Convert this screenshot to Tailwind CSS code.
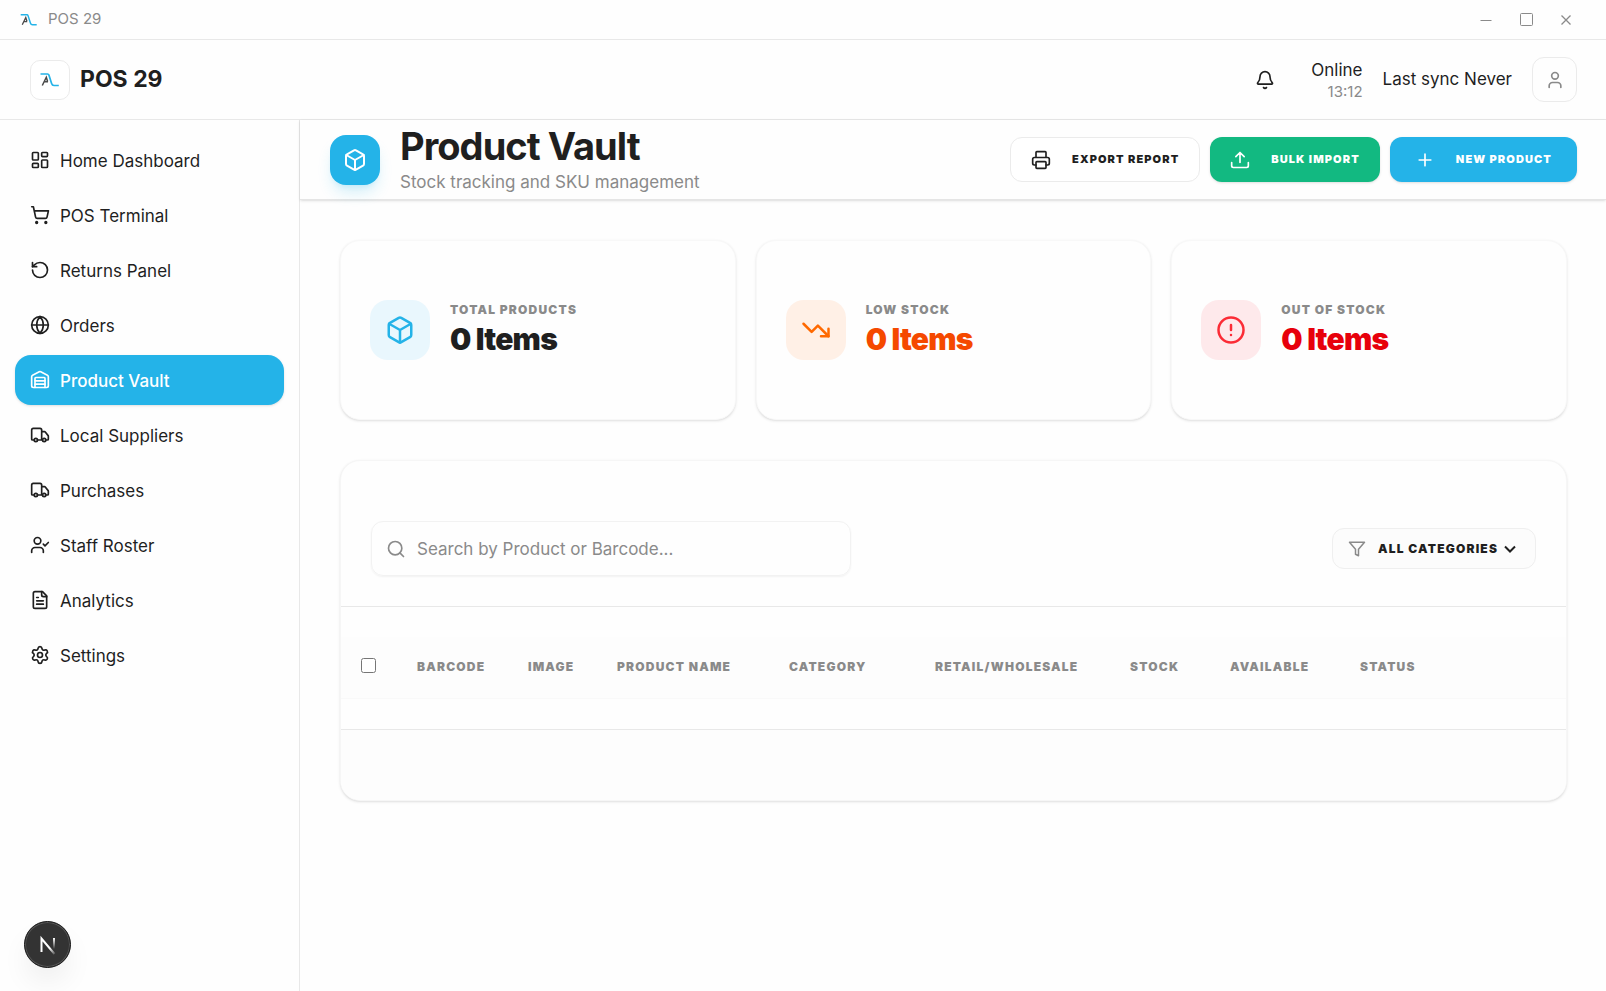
<!DOCTYPE html>
<html lang="en">
<head>
    <meta charset="UTF-8">
    <meta name="viewport" content="width=device-width, initial-scale=1.0">
    <title>POS 29</title>
    <script src="https://cdn.jsdelivr.net/npm/@tailwindcss/browser@4"></script>
</head>
<body class="flex min-h-screen flex-col bg-[#fefefe] font-['Inter','Liberation_Sans',sans-serif] text-[17px] text-[#1f1f1f]">
    <!-- Shared icon shapes -->
    <svg class="hidden">
        <symbol id="logo" viewBox="0 0 20 16">
            <path d="M0.500 2H7.600Q8.600 2 8.900 3L11.600 11.500Q12.200 13.500 14 13.500H18.800" fill="none" stroke="#24b3e8" stroke-width="1.7"/>
            <path d="M2.300 13.500L6.300 5.200L7.600 9.500M4.300 9.800H8" fill="none" stroke="#4a4a4a" stroke-width="1.500"/>
        </symbol>
        <symbol id="box" viewBox="0 0 24 24">
            <path d="M21 8a2 2 0 0 0-1-1.73l-7-4a2 2 0 0 0-2 0l-7 4A2 2 0 0 0 3 8v8a2 2 0 0 0 1 1.73l7 4a2 2 0 0 0 2 0l7-4A2 2 0 0 0 21 16Z"/>
            <path d="m3.3 7 8.7 5 8.7-5M12 22V12"/>
        </symbol>
        <symbol id="truck" viewBox="0 0 24 24">
            <path d="M14 18V6a2 2 0 0 0-2-2H4a2 2 0 0 0-2 2v11a1 1 0 0 0 1 1h2M15 18H9M19 18h2a1 1 0 0 0 1-1v-3.65a1 1 0 0 0-.22-.624l-3.48-4.35A1 1 0 0 0 17.52 8H14"/>
            <circle cx="17" cy="18" r="2"/><circle cx="7" cy="18" r="2"/>
        </symbol>
    </svg>

    <!-- Title bar -->
    <div class="flex h-10 items-center justify-between border-b border-[#e8e8e8] pr-[30px] pl-5">
        <div class="flex items-center gap-2.5 text-[15px] text-[#8a8a8a]">
            <svg class="h-3.5 w-[18px]"><use href="#logo"/></svg>
            <span>POS 29</span>
        </div>
        <div class="flex items-center gap-5 text-[#8a8a8a]">
            <button type="button" aria-label="Minimize" class="flex size-5 items-center justify-center"><svg class="size-3" viewBox="0 0 12 12" fill="none" stroke="currentColor"><path d="M0.5 6.5h11"/></svg></button>
            <button type="button" aria-label="Maximize" class="flex size-5 items-center justify-center"><svg class="size-[13px]" viewBox="0 0 13 13" fill="none" stroke="currentColor"><rect x="0.5" y="0.5" width="12" height="12" rx="1"/></svg></button>
            <button type="button" aria-label="Close" class="flex size-5 items-center justify-center"><svg class="size-2.5" viewBox="0 0 10 10" fill="none" stroke="currentColor" stroke-width="1.3"><path d="M0.5 0.5l9 9M9.5 0.5l-9 9"/></svg></button>
        </div>
    </div>

    <!-- App header -->
    <header class="flex h-20 items-center justify-between border-b border-[#e8e8e8] pr-[29px] pl-[30px]">
        <div class="flex items-center gap-2.5">
            <div class="flex size-10 items-center justify-center rounded-[10px] border border-[#ebebeb] bg-white">
                <svg class="h-4 w-5"><use href="#logo"/></svg>
            </div>
            <span class="text-[23px] font-bold">POS 29</span>
        </div>
        <div class="flex items-center gap-5">
            <button type="button" aria-label="Notifications" class="mr-4 flex size-5 items-center justify-center">
                <svg class="size-5 fill-none stroke-current stroke-2" viewBox="0 0 24 24" stroke-linecap="round" stroke-linejoin="round"><path d="M10.268 21a2 2 0 0 0 3.464 0M3.262 15.326A1 1 0 0 0 4 17h16a1 1 0 0 0 .74-1.673C19.41 13.956 18 12.499 18 8A6 6 0 0 0 6 8c0 4.499-1.411 5.956-2.738 7.326"/></svg>
            </button>
            <div class="flex flex-col items-end">
                <span class="leading-6">Online</span>
                <span class="text-[15px] leading-5 text-[#8a8a8a]">13:12</span>
            </div>
            <span>Last sync Never</span>
            <button type="button" aria-label="Account" class="flex size-[45px] items-center justify-center rounded-xl border border-[#ebebeb] text-[#8a8a8a]">
                <svg class="size-5 fill-none stroke-current stroke-2" viewBox="0 0 24 24" stroke-linecap="round" stroke-linejoin="round"><path d="M19 21v-2a4 4 0 0 0-4-4H9a4 4 0 0 0-4 4v2"/><circle cx="12" cy="7" r="4"/></svg>
            </button>
        </div>
    </header>

    <div class="flex flex-1">
        <!-- Sidebar -->
        <aside class="w-[300px] shrink-0 border-r border-[#e8e8e8] px-[15px] pt-[15px]">
            <nav class="flex flex-col gap-[5px] [&_a]:pt-[3px] [&_svg]:mb-1 [&_svg]:size-5 [&_svg]:fill-none [&_svg]:stroke-current [&_svg]:stroke-2">
                <a href="#" class="flex h-[50px] items-center gap-2.5 rounded-2xl px-[15px]">
                    <svg viewBox="0 0 24 24" stroke-linecap="round" stroke-linejoin="round"><rect width="7" height="9" x="3" y="3" rx="1"/><rect width="7" height="5" x="14" y="3" rx="1"/><rect width="7" height="9" x="14" y="12" rx="1"/><rect width="7" height="5" x="3" y="16" rx="1"/></svg>
                    Home Dashboard
                </a>
                <a href="#" class="flex h-[50px] items-center gap-2.5 rounded-2xl px-[15px]">
                    <svg viewBox="0 0 24 24" stroke-linecap="round" stroke-linejoin="round"><circle cx="8" cy="21" r="1"/><circle cx="19" cy="21" r="1"/><path d="M2.05 2.05h2l2.66 12.42a2 2 0 0 0 2 1.58h9.78a2 2 0 0 0 1.95-1.57l1.65-7.43H5.12"/></svg>
                    POS Terminal
                </a>
                <a href="#" class="flex h-[50px] items-center gap-2.5 rounded-2xl px-[15px]">
                    <svg viewBox="0 0 24 24" stroke-linecap="round" stroke-linejoin="round"><path d="M3 12a9 9 0 1 0 9-9 9.75 9.75 0 0 0-6.74 2.74L3 8"/><path d="M3 3v5h5"/></svg>
                    Returns Panel
                </a>
                <a href="#" class="flex h-[50px] items-center gap-2.5 rounded-2xl px-[15px]">
                    <svg viewBox="0 0 24 24" stroke-linecap="round" stroke-linejoin="round"><circle cx="12" cy="12" r="10"/><path d="M12 2a14.5 14.5 0 0 0 0 20 14.5 14.5 0 0 0 0-20M2 12h20"/></svg>
                    Orders
                </a>
                <a href="#" class="flex h-[50px] items-center gap-2.5 rounded-2xl bg-[#24b3e8] px-[15px] font-medium text-white shadow-sm">
                    <svg viewBox="0 0 24 24" stroke-linecap="round" stroke-linejoin="round"><path d="M18 21V10a1 1 0 0 0-1-1H7a1 1 0 0 0-1 1v11"/><path d="M22 19a2 2 0 0 1-2 2H4a2 2 0 0 1-2-2V8a2 2 0 0 1 1.132-1.803l7.95-3.974a2 2 0 0 1 1.837 0l7.948 3.974A2 2 0 0 1 22 8z"/><path d="M6 13h12M6 17h12"/></svg>
                    Product Vault
                </a>
                <a href="#" class="flex h-[50px] items-center gap-2.5 rounded-2xl px-[15px]">
                    <svg stroke-linecap="round" stroke-linejoin="round"><use href="#truck"/></svg>
                    Local Suppliers
                </a>
                <a href="#" class="flex h-[50px] items-center gap-2.5 rounded-2xl px-[15px]">
                    <svg stroke-linecap="round" stroke-linejoin="round"><use href="#truck"/></svg>
                    Purchases
                </a>
                <a href="#" class="flex h-[50px] items-center gap-2.5 rounded-2xl px-[15px]">
                    <svg viewBox="0 0 24 24" stroke-linecap="round" stroke-linejoin="round"><path d="m16 11 2 2 4-4M16 21v-2a4 4 0 0 0-4-4H6a4 4 0 0 0-4 4v2"/><circle cx="9" cy="7" r="4"/></svg>
                    Staff Roster
                </a>
                <a href="#" class="flex h-[50px] items-center gap-2.5 rounded-2xl px-[15px]">
                    <svg viewBox="0 0 24 24" stroke-linecap="round" stroke-linejoin="round"><path d="M15 2H6a2 2 0 0 0-2 2v16a2 2 0 0 0 2 2h12a2 2 0 0 0 2-2V7Z"/><path d="M14 2v4a2 2 0 0 0 2 2h4M10 9H8M16 13H8M16 17H8"/></svg>
                    Analytics
                </a>
                <a href="#" class="flex h-[50px] items-center gap-2.5 rounded-2xl px-[15px]">
                    <svg viewBox="0 0 24 24" stroke-linecap="round" stroke-linejoin="round"><path d="M9.671 4.136a2.34 2.34 0 0 1 4.659 0 2.34 2.34 0 0 0 3.319 1.915 2.34 2.34 0 0 1 2.33 4.033 2.34 2.34 0 0 0 0 3.831 2.34 2.34 0 0 1-2.33 4.033 2.34 2.34 0 0 0-3.319 1.915 2.34 2.34 0 0 1-4.659 0 2.34 2.34 0 0 0-3.32-1.915 2.34 2.34 0 0 1-2.33-4.033 2.34 2.34 0 0 0 0-3.831A2.34 2.34 0 0 1 6.35 6.051a2.34 2.34 0 0 0 3.319-1.915"/><circle cx="12" cy="12" r="3"/></svg>
                    Settings
                </a>
            </nav>
        </aside>

        <main class="min-w-0 flex-1">
            <!-- Page header -->
            <div class="flex h-20 items-center justify-between border-b border-[#e5e5e5] pr-[29px] pl-[30px] shadow-sm">
                <div class="flex items-center gap-5">
                    <div class="flex size-[50px] items-center justify-center rounded-2xl bg-[#24b3e8] text-white shadow-lg shadow-[#24b3e8]/20">
                        <svg class="size-6 fill-none stroke-current stroke-2" stroke-linecap="round" stroke-linejoin="round"><use href="#box"/></svg>
                    </div>
                    <div>
                        <h1 class="text-[38px] leading-[44px] font-bold tracking-tight">Product Vault</h1>
                        <p class="leading-7 text-[#8a8a8a]">Stock tracking and SKU management</p>
                    </div>
                </div>
                <div class="flex gap-2.5 text-[11px] font-black tracking-widest">
                    <button type="button" class="flex h-[45px] items-center gap-[21px] rounded-xl border border-[#ebebeb] bg-white px-5">
                        <svg class="size-5 fill-none stroke-current stroke-2" viewBox="0 0 24 24" stroke-linecap="round" stroke-linejoin="round"><path d="M6 18H4a2 2 0 0 1-2-2v-5a2 2 0 0 1 2-2h16a2 2 0 0 1 2 2v5a2 2 0 0 1-2 2h-2M6 9V3a1 1 0 0 1 1-1h10a1 1 0 0 1 1 1v6"/><rect x="6" y="14" width="12" height="8" rx="1"/></svg>
                        EXPORT REPORT
                    </button>
                    <button type="button" class="flex h-[45px] items-center gap-[21px] rounded-xl bg-[#12b981] px-5 text-white shadow-sm">
                        <svg class="size-5 fill-none stroke-current stroke-2" viewBox="0 0 24 24" stroke-linecap="round" stroke-linejoin="round"><path d="M12 3v12M17 8l-5-5-5 5M22 15v4a2 2 0 0 1-2 2H4a2 2 0 0 1-2-2v-4"/></svg>
                        BULK IMPORT
                    </button>
                    <button type="button" class="flex h-[45px] items-center gap-[21px] rounded-xl bg-[#24b3e8] px-[25px] text-white shadow-sm">
                        <svg class="size-5 fill-none stroke-current stroke-2" viewBox="0 0 24 24" stroke-linecap="round"><path d="M5 12h14M12 5v14"/></svg>
                        NEW PRODUCT
                    </button>
                </div>
            </div>

            <div class="flex flex-col gap-10 py-10 pr-[39px] pl-10">
                <!-- Stock totals -->
                <div class="grid grid-cols-3 gap-5">
                    <div class="flex h-[180px] items-center gap-5 rounded-[20px] border border-[#f8f8f8] bg-[#fefefe] px-[29px] shadow-sm">
                        <div class="flex size-[60px] items-center justify-center rounded-[18px] bg-[#e9f7fd] text-[#24b3e8]">
                            <svg class="size-[30px] fill-none stroke-current stroke-2" stroke-linecap="round" stroke-linejoin="round"><use href="#box"/></svg>
                        </div>
                        <div class="pb-0.5">
                            <p class="text-xs leading-5 font-black tracking-widest text-[#8a8a8a]">TOTAL PRODUCTS</p>
                            <p class="text-[30px] leading-[38px] font-black tracking-tight">0 Items</p>
                        </div>
                    </div>
                    <div class="flex h-[180px] items-center gap-5 rounded-[20px] border border-[#f8f8f8] bg-[#fefefe] px-[29px] shadow-sm">
                        <div class="flex size-[60px] items-center justify-center rounded-[18px] bg-[#fff0e6] text-[#ff6900]">
                            <svg class="size-[30px] fill-none stroke-current stroke-2" viewBox="0 0 24 24" stroke-linecap="round" stroke-linejoin="round"><path d="M16 17h6v-6"/><path d="m22 17-8.500-8.500-5 5L2 7"/></svg>
                        </div>
                        <div class="pb-0.5">
                            <p class="text-xs leading-5 font-black tracking-widest text-[#8a8a8a]">LOW STOCK</p>
                            <p class="text-[30px] leading-[38px] font-black tracking-tight text-[#f54900]">0 Items</p>
                        </div>
                    </div>
                    <div class="flex h-[180px] items-center gap-5 rounded-[20px] border border-[#f8f8f8] bg-[#fefefe] px-[29px] shadow-sm">
                        <div class="flex size-[60px] items-center justify-center rounded-[18px] bg-[#fee9eb] text-[#fb2c36]">
                            <svg class="size-[30px] fill-none stroke-current stroke-2" viewBox="0 0 24 24" stroke-linecap="round"><circle cx="12" cy="12" r="10"/><path d="M12 8v4M12 16h.01"/></svg>
                        </div>
                        <div class="pb-0.5">
                            <p class="text-xs leading-5 font-black tracking-widest text-[#8a8a8a]">OUT OF STOCK</p>
                            <p class="text-[30px] leading-[38px] font-black tracking-tight text-[#e7000b]">0 Items</p>
                        </div>
                    </div>
                </div>

                <!-- Product list -->
                <section class="overflow-hidden rounded-[20px] border border-[#f6f6f6] bg-[#fefefe] shadow-sm">
                    <div class="flex items-center justify-between border-b border-[#e8e8e8] px-[30px] pt-[60px] pb-[30px]">
                        <label class="flex h-[55px] w-[480px] items-center gap-[11px] rounded-xl border border-[#f2f2f2] px-3.5 text-[#8a8a8a] shadow-xs">
                            <svg class="size-5 shrink-0 fill-none stroke-current stroke-2" viewBox="0 0 24 24" stroke-linecap="round"><path d="m21 21-4.340-4.340"/><circle cx="11" cy="11" r="8"/></svg>
                            <input type="search" aria-label="Search products" placeholder="Search by Product or Barcode..." class="w-full pt-0.5 placeholder-[#8a8a8a] outline-none">
                        </label>
                        <label class="flex h-[41px] items-center rounded-xl border border-[#efefef] bg-[#fcfcfc] pr-[18px] pl-[15px]">
                            <svg class="mr-3 size-[18px] fill-none stroke-[#8a8a8a] stroke-2" viewBox="0 0 24 24" stroke-linecap="round" stroke-linejoin="round"><path d="M22 3H2l8 9.460V19l4 2v-8.540Z"/></svg>
                            <select aria-label="Category" class="appearance-none text-xs font-black tracking-widest outline-none">
                                <option>ALL CATEGORIES</option>
                            </select>
                            <svg class="ml-1 size-3.5 fill-none stroke-current stroke-2" viewBox="0 0 14 14"><path d="M2 4.500l5 5 5-5"/></svg>
                        </label>
                    </div>
                    <div class="border-b border-[#e8e8e8] py-[30px]">
                        <table class="w-full table-fixed text-left text-xs font-black tracking-widest text-[#8a8a8a]">
                            <colgroup>
                                <col class="w-[56px]"><col class="w-[111px]"><col class="w-[89px]"><col class="w-[172px]"><col class="w-[146px]"><col class="w-[195px]"><col class="w-[100px]"><col class="w-[130px]"><col>
                            </colgroup>
                            <thead>
                                <tr class="h-[61px] border-b border-[#f9f9f9] bg-[#fdfdfd] [&_th]:pl-5 [&_th]:font-black">
                                    <th><input type="checkbox" aria-label="Select all products" class="mb-1 block size-[15px]"></th>
                                    <th>BARCODE</th>
                                    <th>IMAGE</th>
                                    <th>PRODUCT NAME</th>
                                    <th>CATEGORY</th>
                                    <th>RETAIL/WHOLESALE</th>
                                    <th>STOCK</th>
                                    <th>AVAILABLE</th>
                                    <th>STATUS</th>
                                </tr>
                            </thead>
                        </table>
                    </div>
                    <div class="h-[70px] bg-[#fdfdfd]"></div>
                </section>
            </div>
        </main>
    </div>

    <!-- Dev tools badge -->
    <button type="button" aria-label="Open dev tools" class="fixed bottom-[23px] left-6 flex size-[47px] items-center justify-center rounded-full border border-[#171717] bg-[#333] shadow-[inset_0_0_0_1px_#555,0_16px_32px_-8px_rgba(0,0,0,0.12)]">
        <svg class="size-5" viewBox="0 0 20 20" fill="none" stroke-width="2">
            <defs>
                <linearGradient id="fade-diagonal" x1="12" y1="13" x2="18" y2="20" gradientUnits="userSpaceOnUse"><stop stop-color="#fff"/><stop offset="1" stop-color="#fff" stop-opacity="0"/></linearGradient>
                <linearGradient id="fade-bar" x1="16" y1="3" x2="16" y2="14" gradientUnits="userSpaceOnUse"><stop stop-color="#fff"/><stop offset="1" stop-color="#fff" stop-opacity="0"/></linearGradient>
            </defs>
            <path d="M3.500 17V3.500L16.500 19" stroke="url(#fade-diagonal)"/>
            <path d="M16 3v12" stroke="url(#fade-bar)"/>
        </svg>
    </button>
</body>
</html>
